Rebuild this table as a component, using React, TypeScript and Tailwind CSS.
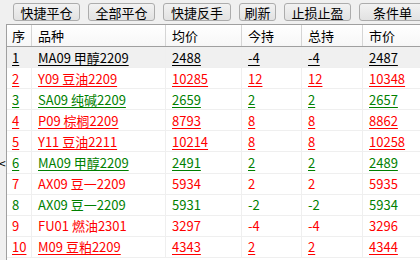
const buttons = [
    { label: '快捷平仓', w: 'w-[67px]' },
    { label: '全部平仓', w: 'w-[67px]' },
    { label: '快捷反手', w: 'w-[68px]' },
    { label: '刷新', w: 'w-[37px]' },
    { label: '止损止盈', w: 'w-[67px]' },
    { label: '条件单', w: 'w-[67px]' },
];

type Row = {
    no: string;
    name: string;
    avg: string;
    today: string;
    total: string;
    price: string;
    color: string;
    underline: boolean;
};

const BLACK = 'text-black';
const RED = 'text-[#ff0000]';
const GREEN = 'text-[#008000]';

const rows: Row[] = [
    { no: '1', name: 'MA09 甲醇2209', avg: '2488', today: '-4', total: '-4', price: '2487', color: BLACK, underline: true },
    { no: '2', name: 'Y09 豆油2209', avg: '10285', today: '12', total: '12', price: '10348', color: RED, underline: true },
    { no: '3', name: 'SA09 纯碱2209', avg: '2659', today: '2', total: '2', price: '2657', color: GREEN, underline: true },
    { no: '4', name: 'P09 棕榈2209', avg: '8793', today: '8', total: '8', price: '8862', color: RED, underline: true },
    { no: '5', name: 'Y11 豆油2211', avg: '10214', today: '8', total: '8', price: '10258', color: RED, underline: true },
    { no: '6', name: 'MA09 甲醇2209', avg: '2491', today: '2', total: '2', price: '2489', color: GREEN, underline: true },
    { no: '7', name: 'AX09 豆一2209', avg: '5934', today: '2', total: '2', price: '5935', color: RED, underline: false },
    { no: '8', name: 'AX09 豆一2209', avg: '5931', today: '-2', total: '-2', price: '5934', color: GREEN, underline: false },
    { no: '9', name: 'FU01 燃油2301', avg: '3297', today: '-4', total: '-4', price: '3296', color: RED, underline: false },
    { no: '10', name: 'M09 豆粕2209', avg: '4343', today: '2', total: '2', price: '4344', color: RED, underline: true },
];

const cols = ['w-[25px] pl-[5px]', 'w-[134px] pl-[6px]', 'w-[76px] pl-[6px]', 'w-[60px] pl-[6px]', 'w-[61px] pl-[6px]', 'w-[60px] pl-[6px]'];
const headers = ['序', '品种', '均价', '今持', '总持', '市价'];

export default function App() {
    return (
        <div className="flex h-[260px] w-[420px] flex-col overflow-hidden bg-[#f0f0f0] text-[13px] leading-none text-black [font-family:'Noto_Sans_CJK_SC',sans-serif]">
            <div className="flex h-[24px] shrink-0 items-start gap-[8px] pl-[13px] pt-[3px]">
                {buttons.map((b) => (
                    <button
                        key={b.label}
                        className={`${b.w} flex h-[18px] shrink-0 items-center justify-center rounded-[3px] border border-[#acacac] bg-gradient-to-b from-[#f2f2f2] to-[#e2e2e2] text-[13px] text-black`}
                    >
                        {b.label}
                    </button>
                ))}
            </div>

            <div className="flex min-h-0 flex-1">
                <div className="relative w-[7px] shrink-0 border-r border-[#a0a0a0] bg-[#f0f0f0]">
                    <span className="absolute left-[-1px] top-[133px] text-[12px] text-black">&lt;</span>
                </div>
                <div className="flex min-w-0 flex-1 flex-col bg-white">
                    <div className="flex h-[23px] shrink-0 border-t border-b border-[#a0a0a0] bg-gradient-to-b from-white to-[#f7f7f7]">
                        {headers.map((h, i) => (
                            <div
                                key={h}
                                className={`${cols[i]} flex shrink-0 items-center border-r border-[#d5d5d5]`}
                            >
                                {h}
                            </div>
                        ))}
                    </div>
                    {rows.map((r, idx) => {
                        const cells = [r.no, r.name, r.avg, r.today, r.total, r.price];
                        return (
                            <div
                                key={idx}
                                className={`flex h-[21.1px] shrink-0 border-b border-[#efefef] ${idx === 0 ? 'bg-[#f0f0f0]' : 'bg-white'} ${r.color}`}
                            >
                                {cells.map((c, i) => (
                                    <div
                                        key={i}
                                        className={`${cols[i]} flex shrink-0 items-center border-r border-[#efefef]`}
                                    >
                                        <span className={r.underline ? 'underline underline-offset-[2px]' : ''}>{c}</span>
                                    </div>
                                ))}
                            </div>
                        );
                    })}
                </div>
            </div>
        </div>
    );
}
